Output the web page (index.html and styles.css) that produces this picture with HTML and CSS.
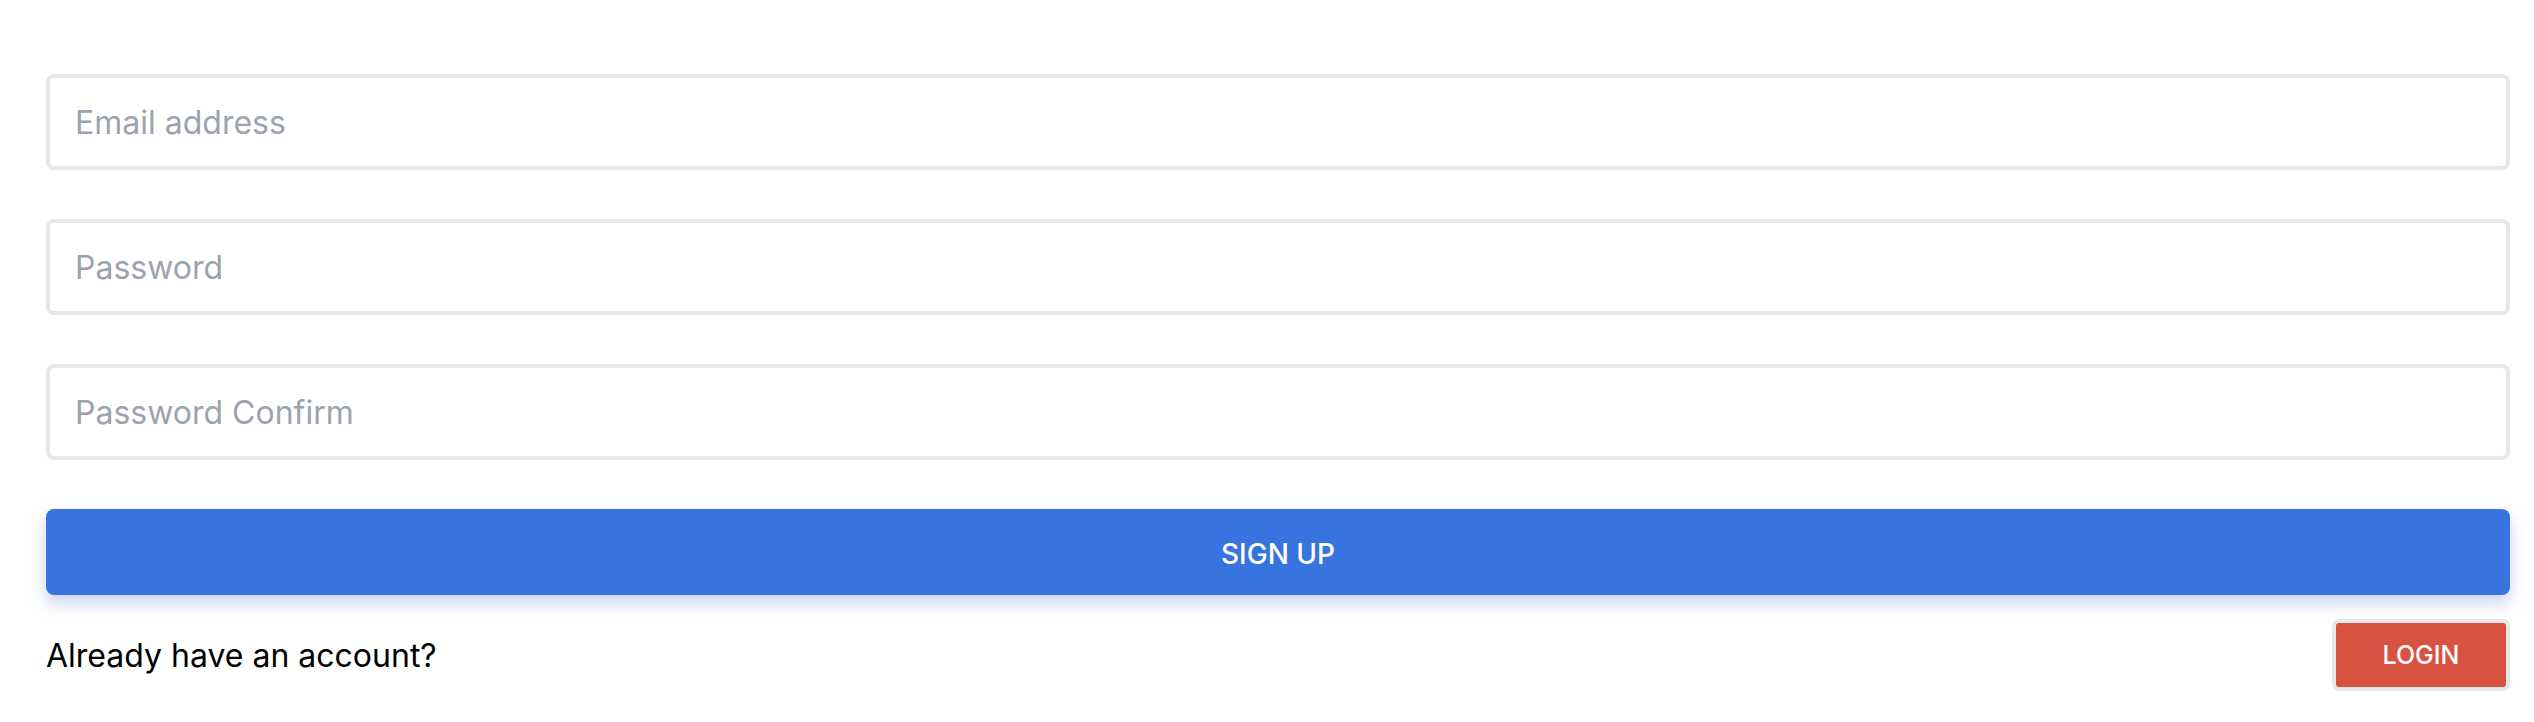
FILE: index.html
```html
<!DOCTYPE html>
<html lang="en">
<head>
<meta charset="utf-8">
<title>Sign up</title>
<link rel="stylesheet" href="styles.css">
</head>
<body>
<form class="signup">
  <input class="field" type="email" placeholder="Email address">
  <input class="field" type="password" placeholder="Password">
  <input class="field" type="password" placeholder="Password Confirm">
  <button class="btn-primary" type="button">SIGN UP</button>
  <div class="footer">
    <span class="footer-text">Already have an account?</span>
    <button class="btn-login" type="button">LOGIN</button>
  </div>
</form>
</body>
</html>
```
FILE: styles.css
```css
html, body {
  margin: 0;
  padding: 0;
  background: #ffffff;
}
body {
  font-family: Inter, "Liberation Sans", sans-serif;
}
.signup {
  display: flex;
  flex-direction: column;
  gap: 49px;
  padding: 74px 24px 0 46px;
}
.field {
  box-sizing: border-box;
  height: 96px;
  width: 100%;
  border: 4px solid #e5e7eb;
  border-radius: 8px;
  padding: 0 25px;
  font-family: Inter, "Liberation Sans", sans-serif;
  font-size: 32px;
  color: #111827;
  background: #fff;
  outline: none;
}
.field::placeholder {
  color: #9ca3af;
  opacity: 1;
}
.btn-primary {
  height: 86px;
  width: 100%;
  border: none;
  border-radius: 8px;
  padding: 4px 0 0;
  background: #3874e0;
  color: #fff;
  font-family: Inter, "Liberation Sans", sans-serif;
  font-size: 28px;
  font-weight: 500;
  box-shadow: 0 8px 16px rgba(57, 92, 200, 0.28);
}
.footer {
  margin-top: -25px;
  display: flex;
  align-items: center;
  justify-content: space-between;
}
.footer-text {
  font-size: 32px;
  color: #000;
}
.btn-login {
  box-sizing: border-box;
  height: 72px;
  width: 178px;
  border: 4px solid #e5e7eb;
  border-radius: 7px;
  background: #d85242;
  color: #fff;
  font-family: Inter, "Liberation Sans", sans-serif;
  font-size: 25px;
  font-weight: 500;
}
```
